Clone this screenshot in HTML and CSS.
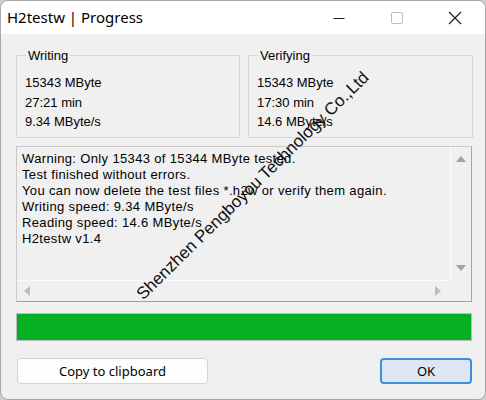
FILE: index.html
```html
<!DOCTYPE html>
<html>
<head>
<meta charset="utf-8">
<link rel="stylesheet" href="styles.css">
</head>
<body>
<div class="window">
  <div class="titlebar">
    <div class="title">H2testw | Progress</div>
    <div class="caption">
      <div class="cap-btn"><svg width="12" height="12" viewBox="0 0 12 12"><path d="M0.5 6.5h11" stroke="#1a1a1a" stroke-width="1"/></svg></div>
      <div class="cap-btn"><svg width="12" height="12" viewBox="0 0 12 12"><rect x="0.5" y="0.5" width="11" height="11" rx="1.5" fill="none" stroke="#bdbdbd" stroke-width="1"/></svg></div>
      <div class="cap-btn"><svg width="14" height="14" viewBox="0 0 14 14"><path d="M1 1L13 13M13 1L1 13" stroke="#1a1a1a" stroke-width="1.1"/></svg></div>
    </div>
  </div>
  <div class="content">
    <div class="groups">
      <fieldset class="group">
        <legend>Writing</legend>
        <div class="val">15343 MByte</div>
        <div class="val">27:21 min</div>
        <div class="val">9.34 MByte/s</div>
      </fieldset>
      <fieldset class="group">
        <legend>Verifying</legend>
        <div class="val">15343 MByte</div>
        <div class="val">17:30 min</div>
        <div class="val">14.6 MByte/s</div>
      </fieldset>
    </div>
    <div class="log">
      <div class="log-main">
        <div class="log-text">
          <div>Warning: Only 15343 of 15344 MByte tested.</div>
          <div>Test finished without errors.</div>
          <div>You can now delete the test files *.h2w or verify them again.</div>
          <div>Writing speed: 9.34 MByte/s</div>
          <div>Reading speed: 14.6 MByte/s</div>
          <div>H2testw v1.4</div>
        </div>
        <div class="vscroll">
          <svg width="10" height="6" viewBox="0 0 10 6"><path d="M5 0L10 6H0Z" fill="#a3a3a3"/></svg>
          <svg width="10" height="6" viewBox="0 0 10 6"><path d="M0 0H10L5 6Z" fill="#a3a3a3"/></svg>
        </div>
      </div>
      <div class="hscroll-row">
        <div class="hscroll">
          <svg width="6" height="10" viewBox="0 0 6 10"><path d="M0 5L6 0V10Z" fill="#bdbdbd"/></svg>
          <svg width="6" height="10" viewBox="0 0 6 10"><path d="M0 0L6 5L0 10Z" fill="#bdbdbd"/></svg>
        </div>
        <div class="corner"></div>
      </div>
    </div>
    <div class="progress"><div class="progress-fill" style="width:100%"></div></div>
    <div class="buttons">
      <button class="btn">Copy to clipboard</button>
      <button class="btn btn-default">OK</button>
    </div>
  </div>
  <div class="watermark">Shenzhen Pengboyou Technology Co.,Ltd</div>
</div>
</body>
</html>
```
FILE: styles.css
```css
* { box-sizing: border-box; }
html, body { margin: 0; padding: 0; }
body {
  width: 486px;
  height: 400px;
  background: #cfcfcf;
  overflow: hidden;
}
.window {
  position: relative;
  width: 486px;
  height: 400px;
  background: #f0f0f0;
  border: 1px solid #a8a8a8;
  border-radius: 8px;
  overflow: hidden;
  display: flex;
  flex-direction: column;
}
.titlebar {
  height: 33px;
  background: #ffffff;
  display: flex;
  align-items: center;
  justify-content: space-between;
  flex-shrink: 0;
}
.title {
  padding-left: 6px;
  font-family: "Noto Sans", sans-serif;
  font-size: 15px;
  color: #000;
  padding-bottom: 2px;
}
.caption {
  display: flex;
  height: 33px;
  margin-right: 1px;
}
.cap-btn {
  width: 58px;
  height: 33px;
  display: flex;
  align-items: center;
  justify-content: center;
}
.content {
  flex: 1;
  padding: 14px 13px 0 15px;
  display: flex;
  flex-direction: column;
  font-family: "Liberation Sans", sans-serif;
  font-size: 13px;
  color: #000;
}
.groups {
  display: grid;
  grid-template-columns: 224px 225px;
  column-gap: 8px;
}
.group {
  margin: 0;
  border: 1px solid #d7d7d7;
  padding: 10px 8px 0 8px;
  height: 90px;
}
.group legend {
  padding: 0 2px;
  margin-left: 1px;
  font-size: 13px;
}
.val {
  height: 19.5px;
  line-height: 19.5px;
}
.log {
  margin-top: 8px;
  height: 156px;
  border: 1px solid;
  border-color: #c9c9c9 #a6a6a6 #a0a0a0 #c9c9c9;
  display: flex;
  flex-direction: column;
}
.log-main {
  flex: 1;
  display: flex;
}
.log-text {
  flex: 1;
  padding: 4px 5px;
  line-height: 16px;
  font-size: 13px;
  letter-spacing: 0.35px;
  border-right: 1px solid #fbfbfb;
  border-bottom: 1px solid #fbfbfb;
  white-space: nowrap;
  overflow: hidden;
}
.vscroll {
  width: 20px;
  display: flex;
  flex-direction: column;
  justify-content: space-between;
  align-items: center;
  padding: 9px 0 10px;
}
.hscroll-row {
  height: 20px;
  display: flex;
}
.hscroll {
  flex: 1;
  display: flex;
  justify-content: space-between;
  align-items: center;
  padding: 0 10px 0 7px;
}
.corner { width: 20px; }
.progress {
  margin-top: 11px;
  height: 28px;
  border: 1px solid #bcbcbc;
  background: #e6e6e6;
}
.progress-fill {
  height: 100%;
  background: #06b025;
}
.buttons {
  margin-top: 17px;
  display: flex;
  justify-content: space-between;
}
.btn {
  height: 26px;
  font-family: "Noto Sans", sans-serif;
  font-size: 13px;
  color: #000;
  border-radius: 4px;
  padding: 0;
}
.btn:first-child {
  width: 191px;
  margin-left: 1px;
  background: #fdfdfd;
  border: 1px solid #d3d3d3;
}
.btn-default {
  width: 92px;
  background: #dce7f3;
  border: 2px solid #3f8edb;
}
.watermark {
  position: absolute;
  left: 252px;
  top: 185px;
  transform: translate(-50%, -50%) rotate(-44.4deg);
  font-family: "Liberation Sans", sans-serif;
  font-size: 17px;
  color: #111;
  white-space: nowrap;
  pointer-events: none;
}
```
